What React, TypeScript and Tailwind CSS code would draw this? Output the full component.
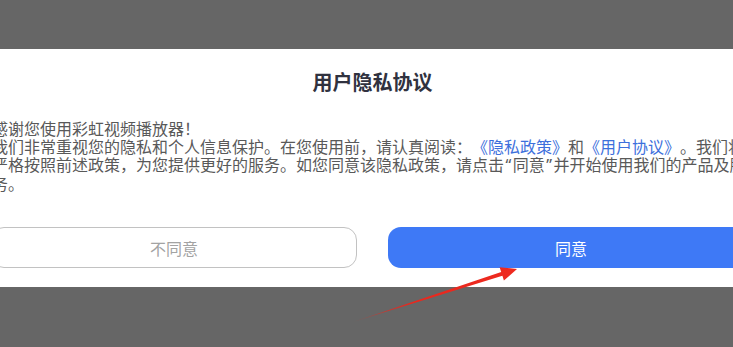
export default function App() {
  return (
    <div className="relative h-[347px] w-[733px] overflow-hidden bg-[#666666] pt-[49px] font-['Noto_Sans_CJK_SC','Noto_Sans',sans-serif] [text-spacing-trim:space-all]">
      <section className="h-[238px] bg-white">
        <div className="ml-[-9px] w-[763px] pt-[19px]">
          <h1 className="text-center text-[20px] font-bold leading-[28px] text-[#30323f]">
            用户隐私协议
          </h1>
          <div className="mt-[23px] pl-px text-[16px] leading-[18px] text-[#595959]">
            <p>感谢您使用彩虹视频播放器！</p>
            <p>
              我们非常重视您的隐私和个人信息保护。在您使用前，请认真阅读：
              <span className="text-[#3d70dc]">《隐私政策》</span>和
              <span className="text-[#3d70dc]">《用户协议》</span>
              。我们将严格按照前述政策，为您提供更好的服务。如您同意该隐私政策，请点击
              <span className="px-[1.5px] font-['Noto_Sans',sans-serif]">“</span>同意
              <span className="px-[1.5px] font-['Noto_Sans',sans-serif]">”</span>
              并开始使用我们的产品及服务。
            </p>
          </div>
          <div className="mt-[35px] flex gap-[31px]">
            <button className="h-[41px] w-[366px] rounded-[13px] border border-[#c2c2c2] bg-white text-[16px] text-[#a3a3a3]">
              不同意
            </button>
            <button className="h-[41px] w-[366px] rounded-[13px] bg-[#3e79f6] text-[16px] text-white">
              同意
            </button>
          </div>
        </div>
      </section>
      <svg className="pointer-events-none absolute left-0 top-0" width="733" height="347" viewBox="0 0 733 347">
        <defs>
          <linearGradient id="arrowFade" x1="353" y1="322" x2="517" y2="269" gradientUnits="userSpaceOnUse">
            <stop offset="0" stopColor="#e8281e" stopOpacity="0.2" />
            <stop offset="0.35" stopColor="#e8281e" />
            <stop offset="1" stopColor="#ee2a1f" />
          </linearGradient>
        </defs>
        <polygon
          points="353,322 502.4,275.8 503.9,280.6 517,269 499.6,267.2 501.2,272 353,322"
          fill="url(#arrowFade)"
        />
      </svg>
    </div>
  );
}
